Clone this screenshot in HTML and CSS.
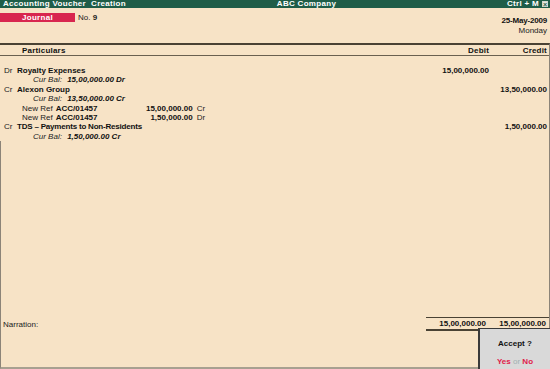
FILE: index.html
```html
<!DOCTYPE html>
<html lang="en">
<head>
  <meta charset="UTF-8" />
  <meta name="viewport" content="width=device-width, initial-scale=1.0" />
  <title>Accounting Voucher Creation</title>
  <link rel="stylesheet" href="styles.css">
</head>
<body>
  <div class="titlebar">
    <span class="tb-left">Accounting Voucher &nbsp;Creation</span>
    <span class="tb-mid">ABC Company</span>
    <span class="tb-right">Ctrl + M <span class="close-box">&times;</span></span>
  </div>

  <div class="voucher-head">
    <div class="vh-left">
      <span class="vtype">Journal</span>
      <span class="vno">No. <b>9</b></span>
    </div>
    <div class="vh-right">
      <div class="vdate">25-May-2009</div>
      <div class="vday">Monday</div>
    </div>
  </div>

  <div class="main">
    <div class="colhead row">
      <span class="part">Particulars</span>
      <span class="amt">Debit</span>
      <span class="amt">Credit</span>
    </div>

    <div class="entries">
      <div class="row">
        <span class="part"><span class="drcr">Dr</span><b>Royalty Expenses</b></span>
        <span class="amt">15,00,000.00</span>
        <span class="amt"></span>
      </div>
      <div class="row sub">
        <span class="curbal">Cur Bal: <b>15,00,000.00 Dr</b></span>
      </div>
      <div class="row">
        <span class="part"><span class="drcr">Cr</span><b>Alexon Group</b></span>
        <span class="amt"></span>
        <span class="amt">13,50,000.00</span>
      </div>
      <div class="row sub">
        <span class="curbal">Cur Bal: <b>13,50,000.00 Cr</b></span>
      </div>
      <div class="row sub">
        <span class="bill">
          <span class="bill-type">New Ref</span>
          <b class="bill-name">ACC/01457</b>
          <b class="bill-amt">15,00,000.00</b>
          <span class="bill-dc">Cr</span>
        </span>
      </div>
      <div class="row sub">
        <span class="bill">
          <span class="bill-type">New Ref</span>
          <b class="bill-name">ACC/01457</b>
          <b class="bill-amt">1,50,000.00</b>
          <span class="bill-dc">Dr</span>
        </span>
      </div>
      <div class="row">
        <span class="part"><span class="drcr">Cr</span><b class="narrow">TDS &ndash; Payments to Non-Residents</b></span>
        <span class="amt"></span>
        <span class="amt">1,50,000.00</span>
      </div>
      <div class="row sub">
        <span class="curbal">Cur Bal: <b>1,50,000.00 Cr</b></span>
      </div>
    </div>

    <div class="lower">
      <div class="filler"></div>
      <div class="footer">
        <span class="narration">Narration:</span>
        <span class="totals">
          <span class="tot">15,00,000.00</span>
          <span class="tot">15,00,000.00</span>
        </span>
      </div>
    </div>
  </div>

  <div class="accept">
    <div class="accept-q">Accept ?</div>
    <div class="accept-opts"><span class="yn">Yes</span> <span class="or">or</span> <span class="yn">No</span></div>
  </div>
</body>
</html>
```

FILE: styles.css
```css
body {
  margin: 0;
  width: 550px;
  height: 369px;
  overflow: hidden;
  background: #f7e3c6;
  font-family: "Liberation Sans", Arial, sans-serif;
  font-size: 8px;
  color: #111;
  display: flex;
  flex-direction: column;
  position: relative;
}
.titlebar {
  height: 8px;
  line-height: 8px;
  background: #1f5d48;
  color: #fff;
  font-weight: bold;
  letter-spacing: 0.3px;
  display: flex;
  justify-content: space-between;
  padding: 0 2px 0 3px;
}
.tb-mid {
  position: relative;
  left: -10px;
}
.tb-right {
  display: flex;
  align-items: center;
  gap: 3px;
}
.close-box {
  width: 6px;
  height: 6px;
  line-height: 5px;
  font-size: 7px;
  text-align: center;
  border: 1px solid #cfd8d0;
  background: #e8e8e0;
  color: #1f5d48;
  box-sizing: border-box;
}
.voucher-head {
  display: flex;
  justify-content: space-between;
  height: 35px;
  padding-right: 3px;
}
.vh-left {
  display: flex;
  align-items: center;
  gap: 3px;
  margin-top: 5px;
  height: 9px;
}
.vtype {
  width: 75px;
  height: 9px;
  line-height: 9px;
  background: #d8264f;
  color: #fff;
  font-weight: bold;
  text-align: center;
  letter-spacing: 0.3px;
}
.vno {
  color: #222;
}
.vh-right {
  text-align: right;
  margin-top: 8px;
  line-height: 10px;
}
.vdate {
  font-weight: bold;
  letter-spacing: -0.2px;
}
.vday {
  color: #222;
}
.main {
  flex: 1;
  display: flex;
  flex-direction: column;
  border-top: 2px solid #4a4234;
  border-right: 1px solid #8c8478;
}
.row {
  display: grid;
  grid-template-columns: 1fr 60px 58px;
  padding-right: 2px;
  line-height: 9.4px;
}
.colhead {
  height: 10px;
  line-height: 11px;
  font-weight: bold;
  letter-spacing: 0.2px;
  border-bottom: 1px solid #6a6050;
}
.colhead .part {
  padding-left: 22px;
}
.amt {
  text-align: right;
  font-weight: bold;
}
.entries {
  padding-top: 10px;
}
.drcr {
  display: inline-block;
  width: 13px;
  padding-left: 4px;
  color: #222;
}
.narrow {
  letter-spacing: -0.2px;
}
.sub {
  display: block;
}
.curbal {
  padding-left: 33px;
  font-style: italic;
  color: #222;
}
.curbal b {
  padding-left: 3px;
  color: #111;
}
.bill {
  display: flex;
  padding-left: 22px;
  white-space: nowrap;
}
.bill-type {
  color: #222;
  padding-right: 3px;
}
.bill-name {
  width: 60px;
}
.bill-amt {
  width: 77px;
  text-align: right;
}
.bill-dc {
  padding-left: 4px;
  color: #222;
}
.lower {
  flex: 1;
  display: flex;
  flex-direction: column;
  border-left: 1px solid #8c8478;
  border-bottom: 2px solid #a8a090;
}
.filler {
  flex: 1;
}
.footer {
  display: flex;
  justify-content: space-between;
  align-items: flex-start;
  height: 50px;
}
.narration {
  padding: 3px 0 0 2px;
  color: #222;
}
.totals {
  display: flex;
  width: 121px;
  border-top: 1px solid #4a4234;
  border-bottom: 2px solid #4a4234;
  padding: 2px 2px 1px 0;
  line-height: 8px;
}
.tot {
  width: 60px;
  text-align: right;
  font-weight: bold;
}
.accept {
  position: absolute;
  left: 478px;
  top: 328px;
  width: 72px;
  height: 41px;
  box-sizing: border-box;
  background: #d9d9d9;
  border: 1px solid #3a3a3a;
  border-width: 1px 0 0 2px;
  text-align: center;
}
.accept-q {
  font-weight: bold;
  margin-top: 10px;
}
.accept-opts {
  margin-top: 9px;
  font-weight: bold;
}
.yn {
  color: #e0204a;
}
.or {
  color: #a0b0b0;
  font-weight: normal;
}
```
